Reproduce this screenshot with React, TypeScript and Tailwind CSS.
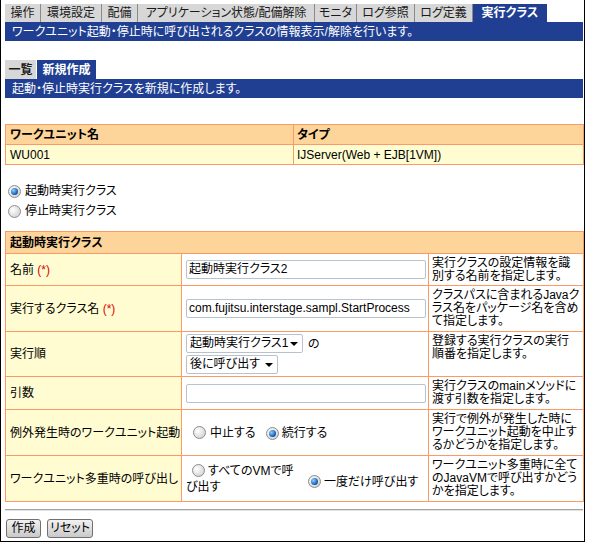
import React from "react";

const FONT =
  "font-['Liberation_Sans','Noto_Sans_CJK_JP',sans-serif] [font-feature-settings:'palt']";

function Radio({ checked }: { checked?: boolean }) {
  return (
    <span className="relative inline-flex h-[13px] w-[13px] shrink-0 items-center justify-center rounded-full border border-[#8d8d8d] bg-[radial-gradient(circle_at_35%_35%,#ffffff,#c9c9c9)]">
      {checked && (
        <span className="block h-[7px] w-[7px] rounded-full bg-[radial-gradient(circle_at_35%_35%,#8fd0ff,#0b55b0_70%,#063a80)]" />
      )}
    </span>
  );
}

function Select({ w, text }: { w: string; text: string }) {
  return (
    <div
      className={`${w} flex h-[19px] items-center justify-between rounded-[2px] border border-[#b9c2cc] bg-white pl-[3px] pr-[4px] leading-[17px]`}
    >
      <span className="whitespace-nowrap">{text}</span>
      <span className="h-0 w-0 border-x-[4px] border-t-[4px] border-x-transparent border-t-black" />
    </div>
  );
}

function Input({ value }: { value?: string }) {
  return (
    <div className="flex h-[19px] w-[240px] items-center overflow-hidden whitespace-nowrap rounded-[2px] border border-[#b6c3d1] bg-white pl-[2px] leading-[17px]">
      {value}
    </div>
  );
}

const tabs: [string, string][] = [
  ["操作", "w-[36px]"],
  ["環境設定", "w-[61px]"],
  ["配備", "w-[36px]"],
  ["アプリケーション状態/配備解除", "w-[177px]"],
  ["モニタ", "w-[42px]"],
  ["ログ参照", "w-[58px]"],
  ["ログ定義", "w-[58px]"],
];

const td = "border border-[#fb9a66]";
const label = `${td} bg-[#fffcd2] pl-[4px] align-middle`;
const desc = `${td} bg-white pl-[3px] pr-[2px] leading-[13px] align-middle`;
const mid = `${td} bg-white pl-[4px] align-middle`;

function Req() {
  return <span className="text-[#e00000]"> (*)</span>;
}

export default function App() {
  return (
    <div
      className={`${FONT} box-border h-[542px] w-[585px] border-x border-b border-black bg-white pl-[4px] pr-[1px] pt-[4px] text-[12px] leading-[14px] text-black`}
    >
      {/* main tabs */}
      <div className="flex h-[18px]">
        {tabs.map(([t, w]) => (
          <div
            key={t}
            className={`${w} flex shrink-0 items-center justify-center whitespace-nowrap border-r border-[#8a8a8a] bg-[#d7d7d7] text-[#1a1a1a]`}
          >
            {t}
          </div>
        ))}
        <div className="flex w-[74px] shrink-0 items-center justify-center whitespace-nowrap bg-[#213f92] font-bold text-white">
          実行クラス
        </div>
      </div>
      <div className="flex h-[19px] items-center bg-[#213f92] pl-[7px] text-white">
        ワークユニット起動・停止時に呼び出されるクラスの情報表示/解除を行います。
      </div>

      {/* sub tabs */}
      <div className="mt-[19px] flex h-[19px]">
        <div className="flex w-[31px] items-center justify-center bg-[#d7d7d7] font-bold text-[#1a1a1a]">
          一覧
        </div>
        <div className="ml-[1px] flex w-[59px] items-center justify-center bg-[#213f92] font-bold text-white">
          新規作成
        </div>
      </div>
      <div className="flex h-[19px] items-center bg-[#213f92] pl-[7px] text-white">
        起動・停止時実行クラスを新規に作成します。
      </div>

      {/* work unit table */}
      <table className="mt-[26px] w-[578px] table-fixed border-collapse">
        <colgroup>
          <col className="w-[288px]" />
          <col className="w-[290px]" />
        </colgroup>
        <tbody>
          <tr className="h-[20px]">
            <td className={`${td} bg-[#fdd49a] pl-[4px] font-bold`}>ワークユニット名</td>
            <td className={`${td} bg-[#fdd49a] pl-[3px] font-bold`}>タイプ</td>
          </tr>
          <tr className="h-[20px]">
            <td className={`${td} bg-[#fffcd2] pl-[4px]`}>WU001</td>
            <td className={`${td} bg-[#fffcd2] pl-[3px]`}>IJServer(Web + EJB[1VM])</td>
          </tr>
        </tbody>
      </table>

      {/* radios */}
      <div className="mt-[16px] flex h-[20px] items-center pl-[3px]">
        <Radio checked />
        <span className="ml-[4px]">起動時実行クラス</span>
      </div>
      <div className="flex h-[20px] items-center pl-[3px]">
        <Radio />
        <span className="ml-[4px]">停止時実行クラス</span>
      </div>

      {/* section table */}
      <table className="mt-[10px] w-[578px] table-fixed border-collapse">
        <colgroup>
          <col className="w-[176px]" />
          <col className="w-[247px]" />
          <col className="w-[155px]" />
        </colgroup>
        <tbody>
          <tr className="h-[22px]">
            <td colSpan={3} className={`${td} bg-[#fdd49a] pl-[4px] font-bold`}>
              起動時実行クラス
            </td>
          </tr>
          <tr className="h-[32px]">
            <td className={label}>
              名前
              <Req />
            </td>
            <td className={mid}>
              <Input value="起動時実行クラス2" />
            </td>
            <td className={desc}>
              実行クラスの設定情報を識
              <br />
              別する名前を指定します。
            </td>
          </tr>
          <tr className="h-[46px]">
            <td className={label}>
              実行するクラス名
              <Req />
            </td>
            <td className={mid}>
              <Input value="com.fujitsu.interstage.sampl.StartProcess" />
            </td>
            <td className={desc}>
              クラスパスに含まれるJavaク
              <br />
              ラス名をパッケージ名を含め
              <br />
              て指定します。
            </td>
          </tr>
          <tr className="h-[45px]">
            <td className={label}>実行順</td>
            <td className={`${td} bg-white pl-[4px] align-middle`}>
              <div className="flex items-center">
                <Select w="w-[117px]" text="起動時実行クラス1" />
                <span className="ml-[5px]">の</span>
              </div>
              <div className="mt-[2px]">
                <Select w="w-[92px]" text="後に呼び出す" />
              </div>
            </td>
            <td className={`${td} bg-white pl-[3px] pr-[2px] pt-[3px] align-top leading-[13px]`}>
              登録する実行クラスの実行
              <br />
              順番を指定します。
            </td>
          </tr>
          <tr className="h-[33px]">
            <td className={label}>引数</td>
            <td className={mid}>
              <Input />
            </td>
            <td className={desc}>
              実行クラスのmainメソッドに
              <br />
              渡す引数を指定します。
            </td>
          </tr>
          <tr className="h-[46px]">
            <td className={label}>例外発生時のワークユニット起動</td>
            <td className={mid}>
              <div className="flex items-center pl-[7px]">
                <Radio />
                <span className="ml-[4px]">中止する</span>
                <span className="ml-[10px]">
                  <Radio checked />
                </span>
                <span className="ml-[3px]">続行する</span>
              </div>
            </td>
            <td className={desc}>
              実行で例外が発生した時に
              <br />
              ワークユニット起動を中止す
              <br />
              るかどうかを指定します。
            </td>
          </tr>
          <tr className="h-[46px]">
            <td className={label}>ワークユニット多重時の呼び出し</td>
            <td className={mid}>
              <div className="flex items-center">
                <div className="w-[122px] leading-[14px]">
                  <span className="ml-[6px] mr-[3px] inline-block align-[-2px]">
                    <Radio />
                  </span>
                  すべてのVMで呼
                  <br />
                  び出す
                </div>
                <div className="flex items-center pt-[6px]">
                  <Radio checked />
                  <span className="ml-[3px]">一度だけ呼び出す</span>
                </div>
              </div>
            </td>
            <td className={desc}>
              ワークユニット多重時に全て
              <br />
              のJavaVMで呼び出すかどう
              <br />
              かを指定します。
            </td>
          </tr>
        </tbody>
      </table>

      <div className="mt-[7px] h-[2px] border-t border-b border-t-[#a3a3a3] border-b-[#e2e2e2]" />

      <div className="mt-[8px] flex gap-[6px] pl-[1px]">
        <button className="flex h-[19px] w-[35px] items-center justify-center rounded-[3px] border border-[#707070] bg-linear-to-b from-[#f2f2f2] to-[#c9c9c9] text-[12px] leading-[17px]">
          作成
        </button>
        <button className="flex h-[19px] w-[46px] items-center justify-center rounded-[3px] border border-[#707070] bg-linear-to-b from-[#f2f2f2] to-[#c9c9c9] text-[12px] leading-[17px]">
          リセット
        </button>
      </div>
    </div>
  );
}
